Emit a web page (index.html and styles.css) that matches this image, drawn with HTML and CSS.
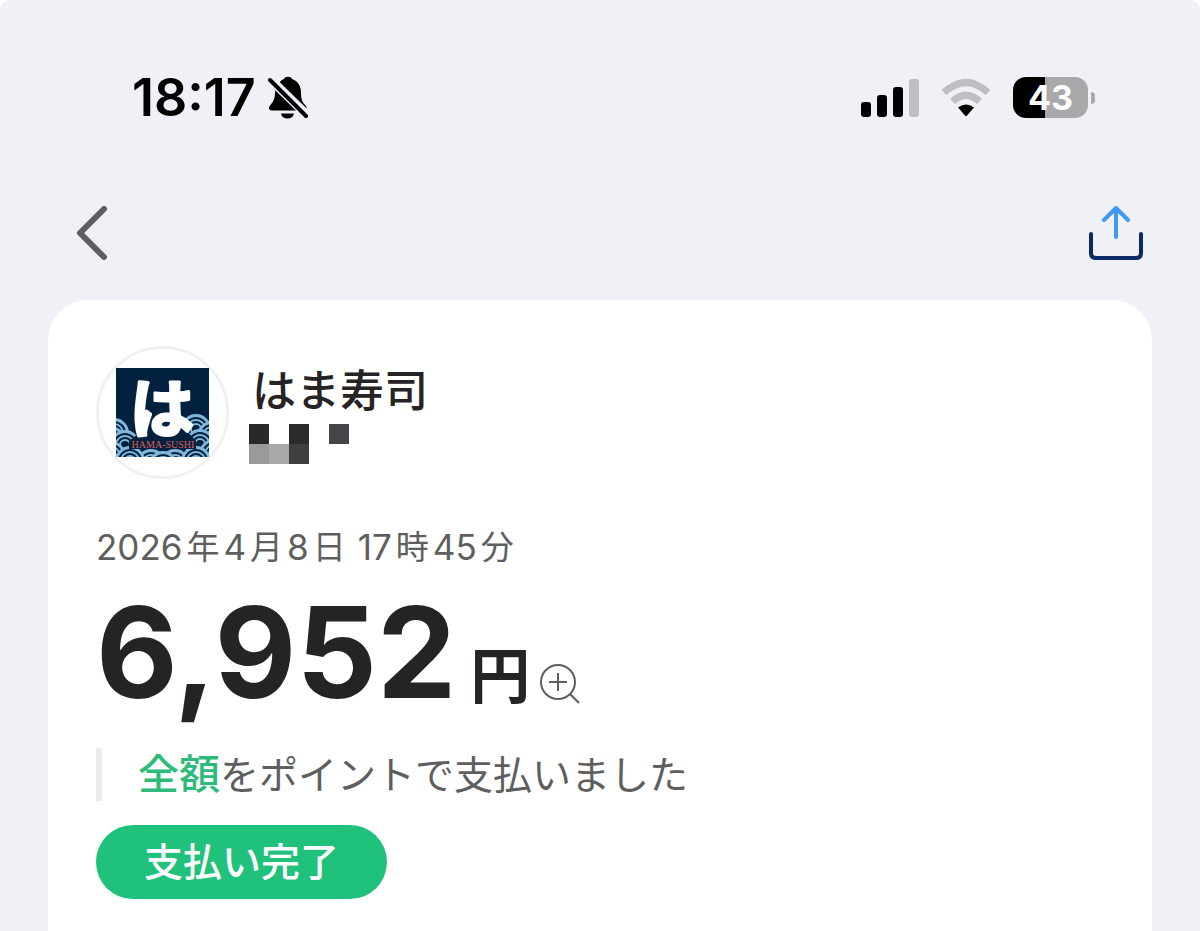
FILE: index.html
```html
<!DOCTYPE html>
<html lang="ja">
<head>
    <meta charset="UTF-8">
    <meta name="viewport" content="width=device-width, initial-scale=1.0">
    <title>支払い完了 - はま寿司</title>
    <link rel="stylesheet" href="styles.css">
</head>
<body>
    <div class="screen">
        <!-- Phone status bar -->
        <div class="status-bar">
            <div class="status-left">
                <span class="clock">18:17</span>
                <svg width="42" height="44" viewBox="0 0 42 44" aria-hidden="true">
                    <path d="M11 7C13 4 15 3.500 16 3C17 0 23 0 24 3C30 5 33 10 33 17C33 24 35 27 38 30Q40 34 36 34.500H4Q-1 34 2 29.500C5 26 6.500 24 7 18Q7 11 11 7Z"/>
                    <path d="M13 37.500H26Q25 42.500 19.500 42.500Q14 42.500 13 37.500Z"/>
                    <path class="bell-gap" d="M1 2L41 41"/>
                    <path class="bell-slash" d="M2 4L38 40"/>
                </svg>
            </div>
            <div class="status-right">
                <svg width="58" height="38" viewBox="0 0 58 38" aria-hidden="true">
                    <rect x="0" y="23" width="10" height="15" rx="3"/>
                    <rect x="16" y="16" width="10" height="22" rx="3"/>
                    <rect x="32" y="8" width="10" height="30" rx="3"/>
                    <rect x="48" y="0" width="10" height="38" rx="3" fill="#bfbfc2"/>
                </svg>
                <svg width="50" height="38" viewBox="0 0 50 38" aria-hidden="true">
                    <path d="M3 13.500Q25 -6.500 47 13.500" fill="none" stroke="#bfbfc2" stroke-width="7"/>
                    <path d="M11.500 22.500Q25 10 38.500 22.500" fill="none" stroke="#bfbfc2" stroke-width="7"/>
                    <path d="M17 28.500Q25 22.500 33 28.500L26 36.500Q25 37.500 24 36.500Z"/>
                </svg>
                <div class="battery">
                    <span class="battery-level">43</span>
                    <span class="battery-tip"></span>
                </div>
            </div>
        </div>

        <!-- Back and share buttons -->
        <nav class="nav-bar">
            <button class="icon-button" aria-label="戻る">
                <svg width="32" height="56" viewBox="0 0 32 56">
                    <path d="M28 4L4 28L28 52" fill="none" stroke="#5e5e5e" stroke-width="6" stroke-linecap="round" stroke-linejoin="round"/>
                </svg>
            </button>
            <button class="icon-button" aria-label="共有">
                <svg width="56" height="56" viewBox="0 0 56 56" fill="none" stroke-width="4" stroke-linecap="round" stroke-linejoin="round">
                    <path d="M3 29V48Q3 53 8 53H48Q53 53 53 48V29" stroke="#0b2a66"/>
                    <path d="M28 32V3M16 15L28 3L40 15" stroke="#3f97f6"/>
                </svg>
            </button>
        </nav>

        <!-- Payment card -->
        <main class="card">
            <div class="shop">
                <div class="shop-logo">
                    <svg width="93" height="89" viewBox="0 0 93 89" role="img" aria-label="はま寿司">
                        <defs>
                            <clipPath id="logo-square">
                                <rect width="93" height="89"/>
                            </clipPath>
                            <g id="wave">
                                <circle r="14" fill="#02213f"/>
                                <circle r="13"/>
                                <circle r="9"/>
                                <circle r="5"/>
                            </g>
                        </defs>
                        <rect width="93" height="89" fill="#02213f"/>
                        <g clip-path="url(#logo-square)" fill="none" stroke="#80b8dc" stroke-width="2">
                            <use href="#wave" x="80" y="61"/>
                            <use href="#wave" x="-2" y="65"/>
                            <use href="#wave" x="96" y="68"/>
                            <use href="#wave" x="-4" y="74"/>
                            <use href="#wave" x="9" y="77"/>
                            <use href="#wave" x="84" y="76"/>
                            <use href="#wave" x="-5" y="88"/>
                            <use href="#wave" x="98" y="86"/>
                            <use href="#wave" x="35" y="96"/>
                            <use href="#wave" x="59" y="96"/>
                            <use href="#wave" x="14" y="93"/>
                            <use href="#wave" x="80" y="93"/>
                            <use href="#wave" x="47" y="98"/>
                        </g>
                        <path d="M16 52H74L70 62L80 73V81H13V73L22 66Z" fill="#02213f"/>
                        <text class="logo-kana" x="46" y="64">は</text>
                        <text class="logo-name" x="47" y="80">HAMA-SUSHI</text>
                    </svg>
                </div>
                <div class="shop-info">
                    <h1 class="shop-name">はま寿司</h1>
                    <svg width="100" height="40" viewBox="0 0 100 40" aria-hidden="true">
                        <rect width="20" height="20" fill="#2a2829"/>
                        <rect x="40" width="20" height="20" fill="#2c2a2b"/>
                        <rect x="80" width="20" height="20" fill="#454449"/>
                        <rect y="20" width="20" height="20" fill="#9a999b"/>
                        <rect x="20" y="20" width="20" height="20" fill="#a9a8aa"/>
                        <rect x="40" y="20" width="20" height="20" fill="#403e40"/>
                    </svg>
                </div>
            </div>

            <p class="date">
                <span>2026</span><span class="kanji">年</span><span>4</span><span class="kanji">月</span><span>8</span><span class="kanji">日</span>
                <span class="hour">17</span><span class="kanji">時</span><span>45</span><span class="kanji">分</span>
            </p>

            <div class="amount">
                <span class="amount-value">6,952</span>
                <span class="amount-unit">円</span>
                <button class="icon-button zoom-button" aria-label="金額を拡大">
                    <svg width="42" height="42" viewBox="0 0 42 42" fill="none" stroke="#5e5e5e" stroke-width="2">
                        <circle cx="19" cy="19" r="17"/>
                        <path d="M19 10V28M10 19H28M31 31L40 40"/>
                    </svg>
                </button>
            </div>

            <p class="note"><strong>全額</strong>をポイントで支払いました</p>
            <span class="badge">支払い完了</span>
        </main>
    </div>
</body>
</html>
```
FILE: styles.css
```css
* {
    box-sizing: border-box;
}

html {
    background-color: #fff;
}

body {
    margin: 0;
    font-family: Inter, "Noto Sans CJK JP", sans-serif;
    color: #252324;
}

.screen {
    display: flex;
    flex-direction: column;
    min-height: 100vh;
    border-radius: 10px 10px 0 0;
    background-color: #eff1f6;
}

/* Status bar */
.status-bar {
    display: flex;
    justify-content: space-between;
    align-items: center;
    padding: 67px 105px 0 132px;
    color: #000;
}

.status-left {
    display: flex;
    align-items: center;
    gap: 12px;
}

.clock {
    font-size: 52px;
    font-weight: 600;
    line-height: 61px;
}

.bell-gap,
.bell-slash {
    fill: none;
    stroke-linecap: round;
}

.bell-gap {
    stroke: #eff1f6;
    stroke-width: 9px;
}

.bell-slash {
    stroke: #000;
    stroke-width: 4px;
}

.status-right {
    display: flex;
    align-items: center;
    gap: 22px;
}

.battery {
    display: flex;
    align-items: center;
    gap: 3px;
}

.battery-level {
    width: 75px;
    border-radius: 13px;
    background: linear-gradient(to right, #000 43%, #a9a9ab 43%);
    color: #fff;
    font-size: 34px;
    font-weight: 700;
    line-height: 41px;
    text-align: center;
}

.battery-tip {
    width: 4px;
    height: 12px;
    border-radius: 0 4px 4px 0;
    background-color: #a9a9ab;
}

/* Navigation */
.nav-bar {
    display: flex;
    justify-content: space-between;
    padding: 77px 56px 39px 76px;
}

.icon-button {
    display: block;
    padding: 0;
    border: none;
    background: none;
    cursor: pointer;
}

.icon-button svg {
    display: block;
}

/* Card */
.card {
    flex: 1;
    margin: 0 48px;
    padding: 46px 48px 30px;
    border-radius: 40px 40px 0 0;
    background-color: #fff;
}

.shop {
    display: flex;
    gap: 20px;
}

.shop-logo {
    display: flex;
    justify-content: center;
    align-items: center;
    width: 133px;
    height: 133px;
    border: 3px solid #f1f1f3;
    border-radius: 50%;
}

.shop-logo svg {
    overflow: visible;
}

.logo-kana {
    fill: #fff;
    stroke: #fff;
    stroke-width: 3px;
    stroke-linejoin: round;
    font-family: "Noto Sans CJK JP", sans-serif;
    font-size: 64px;
    font-weight: 700;
    text-anchor: middle;
}

.logo-name {
    fill: #d9605a;
    font-family: "Liberation Serif", serif;
    font-size: 10px;
    text-anchor: middle;
}

.shop-info {
    padding-top: 15px;
}

.shop-info svg {
    display: block;
}

.shop-name {
    margin: 0 0 3px 3px;
    font-size: 44px;
    font-weight: 500;
    line-height: 60px;
}

.date {
    display: flex;
    gap: 4px;
    margin: 46px 0 0;
    color: #5e5e5e;
    font-size: 35px;
    line-height: 44px;
}

.kanji {
    font-size: 33px;
}

.hour {
    margin-left: 8px;
}

.amount {
    display: flex;
    align-items: baseline;
    margin-top: 8px;
    line-height: 150px;
}

.amount-value {
    font-size: 126px;
    font-weight: 700;
}

.amount-unit {
    margin-left: 14px;
    font-size: 60px;
    font-weight: 700;
    line-height: 60px;
}

.zoom-button {
    align-self: flex-end;
    margin: 0 0 22px 9px;
}

.note {
    margin: 21px 0 24px;
    padding-left: 36px;
    border-left: 6px solid #ececec;
    color: #5e5e5e;
    font-size: 39px;
    line-height: 53px;
}

.note strong {
    color: #2dbb79;
    font-size: 41px;
    font-weight: 500;
}

.badge {
    display: inline-block;
    padding: 0 48px;
    border-radius: 37px;
    background-color: #1fc17b;
    color: #fff;
    font-size: 39px;
    font-weight: 500;
    line-height: 74px;
}
```
